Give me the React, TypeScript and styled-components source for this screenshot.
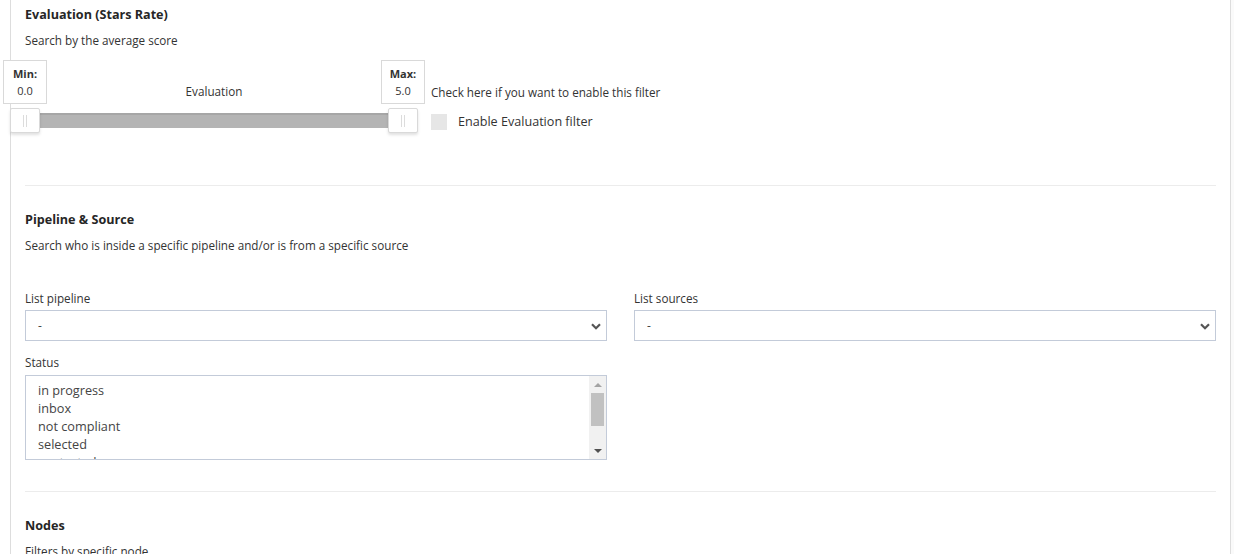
import React from "react";
import styled, { createGlobalStyle } from "styled-components";

const Global = createGlobalStyle`
  html, body { margin: 0; padding: 0; background: #ffffff; }
  body { font-family: "Open Sans", "Liberation Sans", sans-serif; color: #333; }
  * { box-sizing: border-box; }
`;

const Page = styled.div`
  display: flex;
  height: 554px;
  overflow: hidden;
  padding-left: 10px;
  background: #fff;
`;

const Panel = styled.div`
  width: 1221px;
  flex: none;
  background: #fff;
  border-left: 1px solid #dddddd;
  border-right: 1px solid #dddddd;
  padding: 0 14px;
`;

const Filler = styled.div`
  flex: 1;
  background: #fafafa;
`;

const Section = styled.section<{ $top: number; $bottom: number }>`
  padding-top: ${(p) => p.$top}px;
  padding-bottom: ${(p) => p.$bottom}px;
  border-bottom: ${(p) => (p.$bottom ? "1px solid #ececec" : "none")};
`;

const Title = styled.h3`
  margin: 0;
  font-size: 12.6px;
  font-weight: 700;
  line-height: 18px;
  color: #262626;
`;

const Desc = styled.p`
  margin: 7px 0 0;
  font-size: 11.7px;
  line-height: 18px;
  color: #333;
`;

const SliderRow = styled.div`
  display: flex;
  margin-top: 11px;
  gap: 28px;
`;

const SliderBlock = styled.div`
  position: relative;
  width: 378px;
  padding-top: 22px;
`;

const SliderLabel = styled.div`
  text-align: center;
  font-size: 11.7px;
  line-height: 18px;
  color: #333;
`;

const Track = styled.div`
  position: relative;
  margin-top: 13px;
  height: 15px;
  background: #b4b4b4;
  border-top: 2px solid #a6a6a6;
`;

const Handle = styled.div<{ $pos: number }>`
  position: absolute;
  top: -7px;
  left: ${(p) => p.$pos}%;
  transform: translateX(-50%);
  width: 30px;
  height: 25px;
  background: #fff;
  border: 1px solid #d9d9d9;
  border-radius: 2px;
  box-shadow: 0 2px 3px rgba(0, 0, 0, 0.12);
  display: flex;
  justify-content: center;
  align-items: center;
  gap: 2px;
  &::before, &::after {
    content: "";
    width: 1px;
    height: 12px;
    background: #dcdcdc;
  }
`;

const Tip = styled.div<{ $pos: number }>`
  position: absolute;
  top: 0;
  left: ${(p) => p.$pos}%;
  transform: translateX(-50%);
  width: 44px;
  height: 44px;
  background: #fff;
  border: 1px solid #d9d9d9;
  display: flex;
  flex-direction: column;
  align-items: center;
  justify-content: center;
  font-size: 11px;
  line-height: 17px;
  color: #333;
  b { font-weight: 700; color: #333; }
`;

const FilterCol = styled.div`
  padding-top: 23px;
  font-size: 11.7px;
  line-height: 18px;
`;

const CheckRow = styled.label`
  display: flex;
  align-items: center;
  margin-top: 12px;
  gap: 11px;
  font-size: 12.6px;
  color: #333;
`;

const CheckBox = styled.span`
  width: 16px;
  height: 16px;
  background: #e6e6e6;
`;

const Grid = styled.div`
  display: grid;
  grid-template-columns: 1fr 1fr;
  column-gap: 27px;
  margin-top: 35px;
  align-items: start;
`;

const Field = styled.div<{ $mt?: number }>`
  display: flex;
  flex-direction: column;
  margin-top: ${(p) => p.$mt ?? 0}px;
`;

const Label = styled.div<{ $gap: number }>`
  font-size: 11.7px;
  line-height: 18px;
  color: #333;
  margin-bottom: ${(p) => p.$gap}px;
`;

const SelectBox = styled.div`
  position: relative;
  height: 31px;
  border: 1px solid #c3cbd9;
  background: #fff;
  display: flex;
  align-items: center;
  padding-left: 12px;
  font-size: 12px;
  color: #444;
`;

const Chevron = styled.svg`
  position: absolute;
  right: 5px;
  top: 12px;
`;

const ListBox = styled.div`
  position: relative;
  height: 85px;
  border: 1px solid #c3cbd9;
  background: #fff;
  overflow: hidden;
  display: flex;
`;

const Items = styled.div`
  flex: 1;
  padding: 5px 0 0 12px;
  font-size: 12.7px;
  line-height: 18px;
  color: #444;
`;

const ScrollBar = styled.div`
  width: 17px;
  background: #f1f1f1;
  display: flex;
  flex-direction: column;
  align-items: center;
`;

const Arrow = styled.div<{ $down?: boolean }>`
  height: 17px;
  display: flex;
  align-items: center;
  justify-content: center;
  &::before {
    content: "";
    border-left: 4px solid transparent;
    border-right: 4px solid transparent;
    ${(p) =>
      p.$down
        ? "border-top: 4px solid #505050;"
        : "border-bottom: 4px solid #a3a3a3;"}
  }
`;

const Thumb = styled.div`
  width: 13px;
  height: 33px;
  background: #c1c1c1;
`;

const Spacer = styled.div`
  flex: 1;
`;

const ChevronIcon = () => (
  <Chevron width="10" height="7" viewBox="0 0 10 7">
    <path d="M1 1.2 L5 5.2 L9 1.2" fill="none" stroke="#555" strokeWidth="2.2" />
  </Chevron>
);

export default function App() {
  return (
    <>
      <Global />
      <Page>
        <Panel>
          <Section $top={6} $bottom={54}>
            <Title>Evaluation (Stars Rate)</Title>
            <Desc>Search by the average score</Desc>
            <SliderRow>
              <SliderBlock>
                <Tip $pos={0}>
                  <b>Min:</b>
                  <span>0.0</span>
                </Tip>
                <Tip $pos={100}>
                  <b>Max:</b>
                  <span>5.0</span>
                </Tip>
                <SliderLabel>Evaluation</SliderLabel>
                <Track>
                  <Handle $pos={0} />
                  <Handle $pos={100} />
                </Track>
              </SliderBlock>
              <FilterCol>
                <div>Check here if you want to enable this filter</div>
                <CheckRow>
                  <CheckBox />
                  Enable Evaluation filter
                </CheckRow>
              </FilterCol>
            </SliderRow>
          </Section>
          <Section $top={25} $bottom={31}>
            <Title>Pipeline &amp; Source</Title>
            <Desc>Search who is inside a specific pipeline and/or is from a specific source</Desc>
            <Grid>
              <div>
                <Field>
                  <Label $gap={3}>List pipeline</Label>
                  <SelectBox>
                    -
                    <ChevronIcon />
                  </SelectBox>
                </Field>
                <Field $mt={12}>
                  <Label $gap={4}>Status</Label>
                  <ListBox>
                    <Items>
                      <div>in progress</div>
                      <div>inbox</div>
                      <div>not compliant</div>
                      <div>selected</div>
                      <div>contacted</div>
                    </Items>
                    <ScrollBar>
                      <Arrow />
                      <Thumb />
                      <Spacer />
                      <Arrow $down />
                    </ScrollBar>
                  </ListBox>
                </Field>
              </div>
              <Field>
                <Label $gap={3}>List sources</Label>
                <SelectBox>
                  -
                  <ChevronIcon />
                </SelectBox>
              </Field>
            </Grid>
          </Section>
          <Section $top={25} $bottom={0}>
            <Title>Nodes</Title>
            <Desc>Filters by specific node</Desc>
          </Section>
        </Panel>
        <Filler />
      </Page>
    </>
  );
}
